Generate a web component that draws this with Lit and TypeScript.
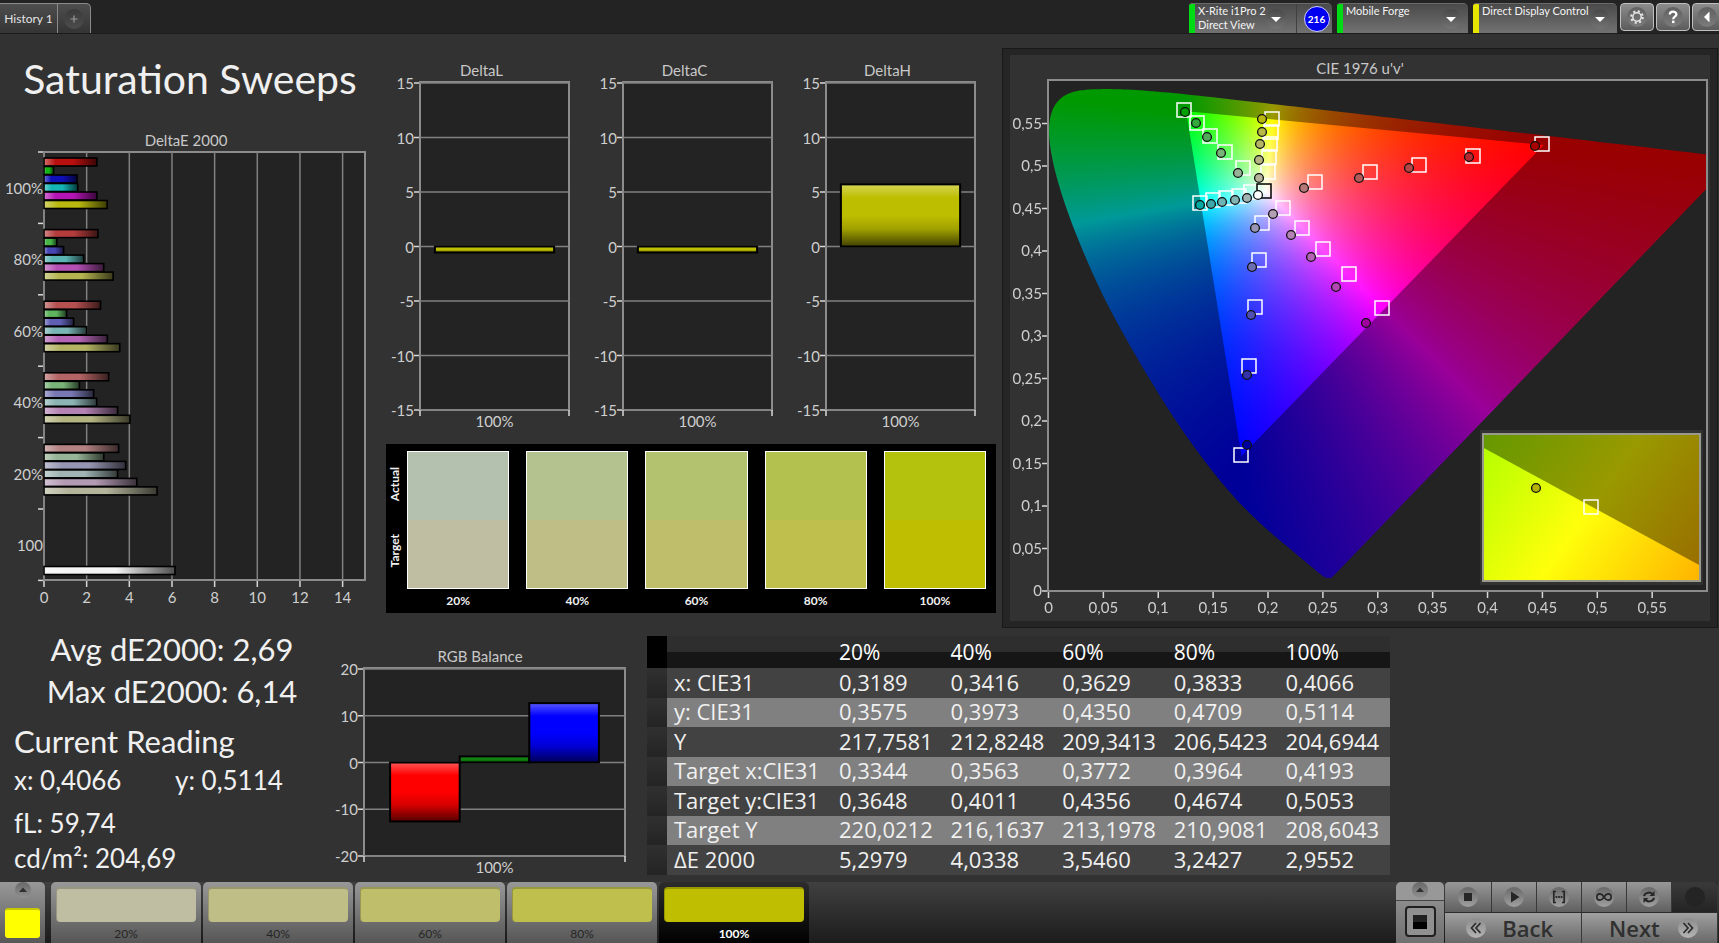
import { LitElement, html, svg, css } from "lit";
import { customElement, property } from "lit/decorators.js";
import { classMap } from "lit/directives/class-map.js";
import { styleMap } from "lit/directives/style-map.js";

const chartText = css`
  :host {
    display: block;
    min-width: 0;
  }
  svg {
    display: block;
    width: 100%;
    height: auto;
    font-family: Lato, "Open Sans", sans-serif;
    font-size: 15px;
    fill: #cfcfcf;
  }
  .title {
    fill: #c8c8c8;
    text-anchor: middle;
  }
  .mid {
    text-anchor: middle;
  }
  .end {
    text-anchor: end;
  }
  .plot {
    fill: #232323;
    stroke: #8c8c8c;
    stroke-width: 2;
  }
  .grid {
    stroke: #808080;
    stroke-width: 1.5;
  }
  .tick {
    stroke: #d8d8d8;
    stroke-width: 1.5;
  }
`;

interface Bar {
  value: number;
  color: string;
}

@customElement("column-chart")
class ColumnChart extends LitElement {
  static styles = chartText;

  @property() heading = "";
  @property({ type: Number }) limit = 15;
  @property({ type: Number }) step = 5;
  @property({ type: Number }) width = 203;
  @property({ type: Number }) height = 378;
  @property({ attribute: false }) bars: Bar[] = [];

  render() {
    const { width, height, limit, step } = this;
    const left = width > 300 ? 44 : 40;
    const right = width - (width > 300 ? 15 : 14);
    const top = width > 300 ? 29 : 25;
    const bottom = height - (width > 300 ? 24 : 26);
    const y = (v: number) => top + ((limit - v) / (2 * limit)) * (bottom - top);
    const values: number[] = [];
    for (let v = limit; v >= -limit; v -= step) values.push(v);
    const margin = (right - left) * 0.1;
    const barWidth = (right - left - 2 * margin) / Math.max(1, this.bars.length);
    return html`<svg viewBox="0 0 ${width} ${height}" role="img" aria-label=${this.heading}>
      <defs>
        <linearGradient id="gloss" x1="0" y1="0" x2="0" y2="1">
          <stop offset="0" stop-color="#fff" stop-opacity=".34"></stop>
          <stop offset=".22" stop-color="#fff" stop-opacity="0"></stop>
          <stop offset=".5" stop-color="#000" stop-opacity="0"></stop>
          <stop offset=".72" stop-color="#000" stop-opacity=".16"></stop>
          <stop offset="1" stop-color="#000" stop-opacity=".66"></stop>
        </linearGradient>
      </defs>
      <text class="title" x=${width / 2} y=${top - 7}>${this.heading}</text>
      <rect class="plot" x=${left} y=${top - 1} width=${right - left} height=${bottom - top + 1}></rect>
      ${values.map(
        (v) => svg`
          <line class="grid" x1=${left} x2=${right} y1=${y(v)} y2=${y(v)}></line>
          <line class="tick" x1=${left - 6} x2=${left - 1} y1=${y(v)} y2=${y(v)}></line>
          <text class="end" x=${left - 6} y=${y(v) + 6}>${v}</text>`
      )}
      <line class="tick" x1=${left} x2=${left} y1=${bottom} y2=${bottom + 6}></line>
      <line class="tick" x1=${right} x2=${right} y1=${bottom} y2=${bottom + 6}></line>
      ${this.bars.map((b, i) => {
        const x = left + margin + i * barWidth;
        const from = Math.min(y(b.value), y(0));
        const tall = Math.abs(y(b.value) - y(0));
        return svg`
          <rect x=${x} y=${from} width=${barWidth} height=${tall} fill=${b.color}></rect>
          <rect x=${x} y=${from} width=${barWidth} height=${tall}
            fill="url(#gloss)" stroke="#000" stroke-width="2"></rect>`;
      })}
      <text class="mid" x=${(left + right) / 2} y=${bottom + 17}>100%</text>
    </svg>`;
  }
}

const SWEEPS: { label: string; bars: [number, string][] }[] = [
  {
    label: "100%",
    bars: [[2.48, "#b80f0f"], [0.45, "#14b414"], [1.55, "#0f0fb8"], [1.58, "#14b4b4"], [2.48, "#b414b4"], [2.96, "#b8b80f"]],
  },
  {
    label: "80%",
    bars: [[2.53, "#b43c3c"], [0.6, "#46b446"], [0.92, "#4646b4"], [1.86, "#5ab4b4"], [2.8, "#b450b4"], [3.24, "#b4b450"]],
  },
  {
    label: "60%",
    bars: [[2.65, "#b45050"], [1.06, "#5fb45f"], [1.39, "#5f5fb4"], [2, "#78b4b4"], [2.97, "#b464b4"], [3.55, "#b4b464"]],
  },
  {
    label: "40%",
    bars: [[3.03, "#b46464"], [1.66, "#78b478"], [2.33, "#7878b4"], [2.47, "#8cb4b4"], [3.45, "#b482b4"], [4.03, "#b4b482"]],
  },
  {
    label: "20%",
    bars: [[3.5, "#b48282"], [2.8, "#96b496"], [3.83, "#9696b4"], [3.45, "#a0b4b4"], [4.35, "#b49bb4"], [5.3, "#b4b49b"]],
  },
];

@customElement("sweep-chart")
class SweepChart extends LitElement {
  static styles = chartText;

  private bar(value: number, color: string, y: number) {
    const w = value * 21.33;
    return svg`
      <rect x="44" y=${y} width=${w} height="8" fill=${color}></rect>
      <rect x="44" y=${y} width=${w} height="8" fill="url(#gloss)" stroke="#000" stroke-width="1.6"></rect>`;
  }

  render() {
    const ticks = [0, 1, 2, 3, 4, 5, 6];
    const values = [0, 2, 4, 6, 8, 10, 12, 14];
    return html`<svg viewBox="0 0 380 492" role="img" aria-label="DeltaE 2000">
      <defs>
        <linearGradient id="gloss">
          <stop offset="0" stop-color="#fff" stop-opacity=".4"></stop>
          <stop offset=".22" stop-color="#fff" stop-opacity="0"></stop>
          <stop offset=".55" stop-color="#000" stop-opacity="0"></stop>
          <stop offset="1" stop-color="#000" stop-opacity=".68"></stop>
        </linearGradient>
      </defs>
      <text class="title" x="186" y="18">DeltaE 2000</text>
      <rect class="plot" x="44" y="24" width="321" height="428"></rect>
      ${values.map(
        (v) => svg`
          <line class="grid" x1=${44 + v * 21.33} x2=${44 + v * 21.33} y1="24" y2="452"></line>
          <line class="tick" x1=${44 + v * 21.33} x2=${44 + v * 21.33} y1="453" y2="459"></line>
          <text class="mid" x=${44 + v * 21.33} y="475">${v}</text>`
      )}
      ${ticks.map((i) => svg`<line class="tick" x1="38" x2="43" y1=${24 + i * 71.4} y2=${24 + i * 71.4}></line>`)}
      ${SWEEPS.map(
        (g, i) => svg`
          <text class="end" x="43" y=${66 + i * 71.4}>${g.label}</text>
          ${g.bars.map(([value, color], k) => this.bar(value, color, 30 + i * 71.6 + k * 8.5))}`
      )}
      <text class="end" x="43" y="423">100</text>
      ${this.bar(6.14, "#f4f4f4", 438.5)}
    </svg>`;
  }
}

// Spectral locus, CIE 1931 x and y.
const LOCUS = [
  [0.1741, 0.005], [0.1714, 0.0051], [0.1689, 0.0069], [0.1644, 0.0109], [0.1566, 0.0177], [0.151, 0.0227],
  [0.144, 0.0297], [0.1355, 0.0399], [0.1241, 0.0578], [0.1096, 0.0868], [0.0913, 0.1327], [0.0687, 0.2007],
  [0.0454, 0.295], [0.0235, 0.4127], [0.0082, 0.5384], [0.0039, 0.6548], [0.0139, 0.7502], [0.0389, 0.812],
  [0.0743, 0.8338], [0.1142, 0.8262], [0.1547, 0.8059], [0.1929, 0.7816], [0.2296, 0.7543], [0.3016, 0.6923],
  [0.3731, 0.6245], [0.4441, 0.5547], [0.5125, 0.4866], [0.5752, 0.4242], [0.627, 0.3725], [0.6658, 0.334],
  [0.6915, 0.3083], [0.719, 0.2809], [0.7347, 0.2653],
];
const GAMUT = [
  [0.4507, 0.5229],
  [0.125, 0.5625],
  [0.1754, 0.1579],
];

type Point = [number, number];
const SERIES: { colors: string[]; targets: Point[]; readings: Point[] }[] = [
  {
    colors: ["#00a000", "#32aa3c", "#50aa5a", "#78b478", "#96b496"],
    targets: [[174, 55], [187, 68], [200, 81], [215, 97], [233, 113]],
    readings: [[175, 57], [186, 68], [197, 82], [211, 98], [228, 118]],
  },
  {
    colors: ["#b8b80f", "#b8b846", "#b4b464", "#b4b482", "#b4b49b"],
    targets: [[262, 64], [261, 77], [260, 89], [259, 102], [258, 117]],
    readings: [[252, 64], [252, 77], [250, 89], [249, 105], [249, 123]],
  },
  {
    colors: ["#00aaa0", "#3caaaa", "#6eb4b4", "#82b4b4", "#a0b4b4"],
    targets: [[190, 148], [203, 145], [216, 143], [229, 141], [241, 137]],
    readings: [[190, 150], [201, 149], [212, 147], [225, 145], [237, 143]],
  },
  {
    colors: ["#b47878", "#b45a5a", "#b44646", "#b42832", "#aa0000"],
    targets: [[305, 127], [360, 117], [409, 110], [463, 101], [532, 89]],
    readings: [[294, 133], [349, 123], [399, 113], [459, 102], [525, 91]],
  },
  {
    colors: ["#b4a0b4", "#b482b4", "#b464b4", "#b446b4", "#a000a0"],
    targets: [[273, 153], [292, 173], [313, 194], [339, 219], [372, 253]],
    readings: [[263, 159], [281, 180], [301, 202], [326, 232], [356, 268]],
  },
  {
    colors: ["#9696b4", "#6e6eb4", "#5050b4", "#3232aa", "#0000a0"],
    targets: [[252, 168], [249, 205], [245, 252], [239, 311], [231, 400]],
    readings: [[245, 173], [242, 212], [241, 260], [237, 320], [237, 390]],
  },
];

@customElement("cie-chart")
class CieChart extends LitElement {
  static styles = [
    chartText,
    css`
      canvas {
        display: block;
      }
      .target {
        fill: none;
        stroke: #fff;
        stroke-width: 1.5;
      }
      .white-point {
        stroke: #000;
      }
      .reading {
        stroke: #101010;
        stroke-width: 1.3;
      }
      .inset-edge {
        fill: #323232;
      }
      .inset-frame {
        fill: none;
        stroke: #9a9a8c;
        stroke-width: 2;
      }
    `,
  ];

  firstUpdated() {
    const canvas = this.renderRoot.querySelector("canvas") as HTMLCanvasElement;
    const ctx = canvas.getContext("2d")!;
    const w = canvas.width;
    const h = canvas.height;
    const toX = (u: number) => u * 1097.5;
    const toY = (v: number) => h + 0.5 - v * 852;

    const sheet = () => {
      const out = document.createElement("canvas");
      out.width = w;
      out.height = h;
      return out;
    };
    const layer = (level: number) => {
      const out = sheet();
      const octx = out.getContext("2d")!;
      const img = octx.createImageData(w, h);
      for (let py = 0; py < h; py++) {
        for (let px = 0; px < w; px++) {
          const u = (px + 0.5) / 1097.5;
          const v = Math.max(0.004, (h - py) / 852);
          const X = (9 * u) / (4 * v);
          const Z = (12 - 3 * u - 20 * v) / (4 * v);
          const rgb = [
            3.2406 * X - 1.5372 - 0.4986 * Z,
            -0.9689 * X + 1.8758 + 0.0415 * Z,
            0.0557 * X - 0.204 + 1.057 * Z,
          ].map((c) => Math.max(0, c));
          const peak = Math.max(...rgb, 1e-6);
          const at = (py * w + px) * 4;
          for (let k = 0; k < 3; k++) img.data[at + k] = (255 * level * rgb[k]) / peak;
          img.data[at + 3] = 255;
        }
      }
      octx.putImageData(img, 0, 0);
      return out;
    };
    // The outline is widened by a round pen, then used as a mask for the colours.
    const paint = (points: number[][], level: number, pen: number) => {
      const mask = sheet();
      const m = mask.getContext("2d")!;
      m.beginPath();
      points.forEach(([u, v]) => m.lineTo(toX(u), toY(v)));
      m.closePath();
      m.fill();
      if (pen > 0) {
        m.lineWidth = pen;
        m.lineJoin = "round";
        m.stroke();
      }
      m.globalCompositeOperation = "source-in";
      m.drawImage(layer(level), 0, 0);
      ctx.drawImage(mask, 0, 0);
    };
    const locus = LOCUS.map(([x, y]) => {
      const d = -2 * x + 12 * y + 3;
      return [(4 * x) / d, (9 * y) / d];
    });
    // Catmull-Rom subdivision rounds the sparse part of the locus.
    const smooth: number[][] = [];
    for (let i = 0; i < locus.length - 1; i++) {
      const p0 = locus[Math.max(0, i - 1)];
      const p1 = locus[i];
      const p2 = locus[i + 1];
      const p3 = locus[Math.min(locus.length - 1, i + 2)];
      for (let s = 0; s < 8; s++) {
        const t = s / 8;
        smooth.push(
          [0, 1].map(
            (k) =>
              0.5 *
              (2 * p1[k] +
                (p2[k] - p0[k]) * t +
                (2 * p0[k] - 5 * p1[k] + 4 * p2[k] - p3[k]) * t * t +
                (3 * p1[k] - p0[k] - 3 * p2[k] + p3[k]) * t * t * t)
          )
        );
      }
    }
    smooth.push(locus[locus.length - 1]);
    paint(smooth, 0.6, 3);
    paint(GAMUT, 1, 0);
  }

  private target([x, y]: Point, extra = "") {
    return svg`<rect class="target ${extra}" x=${x - 7} y=${y - 7} width="14" height="14"></rect>`;
  }

  private reading([x, y]: Point, color: string) {
    return svg`<circle class="reading" cx=${x} cy=${y} r="4.4" fill=${color}></circle>`;
  }

  render() {
    const ticks = Array.from({ length: 12 }, (_, i) => i);
    const label = (i: number) => String(Math.round(i * 5) / 100).replace(".", ",");
    return html`<svg viewBox="0 0 700 566" role="img" aria-label="CIE 1976 u'v'">
      <defs>
        <linearGradient id="lit" gradientUnits="userSpaceOnUse" x1="474" y1="377" x2="688" y2="527">
          <stop offset="0" stop-color="#b0ff00"></stop>
          <stop offset=".5" stop-color="#ffff0a"></stop>
          <stop offset="1" stop-color="#ffb400"></stop>
        </linearGradient>
        <linearGradient id="dim" gradientUnits="userSpaceOnUse" x1="474" y1="377" x2="688" y2="527">
          <stop offset="0" stop-color="#649900"></stop>
          <stop offset=".5" stop-color="#999900"></stop>
          <stop offset="1" stop-color="#996c00"></stop>
        </linearGradient>
      </defs>
      <text class="title" x="350" y="19">CIE 1976 u'v'</text>
      <rect class="plot" x="38" y="25" width="659" height="511"></rect>
      <foreignObject x="39" y="26" width="657" height="509">
        <canvas width="657" height="509"></canvas>
      </foreignObject>
      ${ticks.map(
        (i) => svg`
          <line class="tick" x1=${38.5 + i * 54.88} x2=${38.5 + i * 54.88} y1="537" y2="543"></line>
          <text class="mid" x=${38.5 + i * 54.88} y="558">${label(i)}</text>
          <line class="tick" x1="32" x2="37" y1=${536 - i * 42.5} y2=${536 - i * 42.5}></line>
          <text class="end" x="32" y=${541 - i * 42.5}>${label(i)}</text>`
      )}
      ${SERIES.map((s) => s.targets.map((p) => this.target(p)))}
      ${this.target([254, 136], "white-point")}
      ${SERIES.map((s) => s.readings.map((p, i) => this.reading(p, s.colors[i])))}
      ${this.reading([248, 140], "#ffffff")}
      <rect class="inset-edge" x="470" y="375" width="223" height="155"></rect>
      <rect x="472" y="378" width="219" height="149" fill="url(#dim)"></rect>
      <path d="M472 392L691 511V527H472Z" fill="url(#lit)"></path>
      <rect class="inset-frame" x="473" y="379" width="217" height="147"></rect>
      ${this.target([581, 452])} ${this.reading([526, 433], "#b4b400")}
    </svg>`;
  }
}

const SWATCHES = [
  { label: "20%", actual: "#b4c1ae", target: "#bfbea3" },
  { label: "40%", actual: "#b4c28f", target: "#c0be87" },
  { label: "60%", actual: "#b3c26f", target: "#bebe6b" },
  { label: "80%", actual: "#b3c14e", target: "#bebf4c" },
  { label: "100%", actual: "#b4c10d", target: "#bfbe00" },
];

const ROWS: [string, string[]][] = [
  ["x: CIE31", ["0,3189", "0,3416", "0,3629", "0,3833", "0,4066"]],
  ["y: CIE31", ["0,3575", "0,3973", "0,4350", "0,4709", "0,5114"]],
  ["Y", ["217,7581", "212,8248", "209,3413", "206,5423", "204,6944"]],
  ["Target x:CIE31", ["0,3344", "0,3563", "0,3772", "0,3964", "0,4193"]],
  ["Target y:CIE31", ["0,3648", "0,4011", "0,4356", "0,4674", "0,5053"]],
  ["Target Y", ["220,0212", "216,1637", "213,1978", "210,9081", "208,6043"]],
  ["ΔE 2000", ["5,2979", "4,0338", "3,5460", "3,2427", "2,9552"]],
];

const icon = (body: unknown) => html`<svg class="icon" viewBox="0 0 20 20" aria-hidden="true">${body}</svg>`;

const ICONS = {
  down: svg`<path d="M5 8H15L10 13Z" fill="#fff"/>`,
  left: svg`<path d="M12.5 4.5V15.5L7 10Z" fill="#fff"/>`,
  up: svg`<path d="M5 12.5H15L10 7Z" fill="#303030"/>`,
  plus: svg`<path d="M10 6.5V13.5M6.5 10H13.5" stroke="#9a9a9a" stroke-width="1.2"/>`,
  gear: svg`<g fill="none" stroke="#e6e6e6"><circle cx="10" cy="10" r="4.2" stroke-width="1.5"/><circle cx="10" cy="10" r="5.8" stroke-width="2" stroke-dasharray="2.2 2.355"/></g>`,
  help: svg`<path d="M6.8 7.6C6.8 3.6 13.4 3.7 13.4 7.4C13.4 9.6 10.2 9.8 10.2 12.2" fill="none" stroke="#fff" stroke-width="2.3"/><rect x="9" y="13.6" width="2.5" height="2.5" fill="#fff"/>`,
  stop: svg`<rect x="6" y="6" width="8" height="8" fill="#262626"/>`,
  play: svg`<path d="M7 4.5V15.5L15.5 10Z" fill="#262626"/>`,
  range: svg`<g fill="none" stroke="#262626" stroke-width="1.7"><path d="M7 4.5H4.8V15.5H7M13 4.5H15.2V15.5H13"/><path d="M6.6 10H13.4" stroke-width="2" stroke-dasharray="1.7 .85"/></g>`,
  loop: svg`<path d="M10 10C8.5 7.6 7.2 6.9 5.9 6.9A3.1 3.1 0 0 0 5.9 13.1C7.2 13.1 8.5 12.4 10 10C11.5 7.6 12.8 6.9 14.1 6.9A3.1 3.1 0 0 1 14.1 13.1C12.8 13.1 11.5 12.4 10 10Z" fill="none" stroke="#262626" stroke-width="1.6"/>`,
  repeat: svg`<g fill="none" stroke="#262626" stroke-width="2"><path d="M5 9.2C5.5 6 10.5 4.2 13.5 7"/><path d="M15 10.8C14.5 14 9.5 15.8 6.5 13"/></g><path d="M15.5 4V9H10.5ZM4.5 16V11H9.5Z" fill="#262626"/>`,
  back: svg`<path d="M10 5L5.5 10L10 15M14.5 5L10 10L14.5 15" fill="none" stroke="#2c2c2c" stroke-width="1.7"/>`,
  next: svg`<path d="M10 5L14.5 10L10 15M5.5 5L10 10L5.5 15" fill="none" stroke="#2c2c2c" stroke-width="1.7"/>`,
};

@customElement("app-root")
class AppRoot extends LitElement {
  static styles = css`
    :host {
      display: flex;
      flex-direction: column;
      min-height: 100vh;
      overflow: hidden;
      background: #323232;
      color: #f0f0f0;
      font-family: Lato, "Open Sans", sans-serif;
    }
    * {
      box-sizing: border-box;
    }
    button {
      margin: 0;
      padding: 0;
      border: 0;
      background: none;
      color: inherit;
      font: inherit;
    }
    h1,
    h2,
    p {
      margin: 0;
      font-weight: 400;
    }
    .icon {
      display: block;
      width: 20px;
      height: 20px;
      border-radius: 50%;
      flex: none;
    }

    header {
      display: flex;
      align-items: flex-end;
      justify-content: space-between;
      height: 34px;
      background: #232323;
      border-bottom: 1px solid #1c1c1c;
    }
    .tabs {
      display: flex;
      height: 30px;
      border: solid #8a8a8a;
      border-width: 1px 1px 0 0;
      border-radius: 0 5px 0 0;
      background: linear-gradient(#4e4e4e, #343434);
    }
    .tab {
      width: 58px;
      border-right: 1px solid #8a8a8a;
      color: #e4e4e4;
      font-size: 12px;
      text-align: center;
    }
    .add {
      display: grid;
      place-items: center;
      width: 32px;
    }
    .add .icon {
      background: linear-gradient(#3a3a3a, #4c4c4c);
    }
    .devices {
      display: flex;
      gap: 5px;
    }
    .device {
      display: flex;
      height: 30px;
      border-radius: 3px 5px 0 0;
      border-top: 1px solid #6a6a6a;
      background: linear-gradient(#4a4a4a, #727272);
      color: #f4f4f4;
      font-size: 11px;
      line-height: 14px;
      overflow: hidden;
    }
    .lamp {
      flex: none;
      width: 6px;
      background: #00dc14;
    }
    .lamp.yellow {
      background: #e6e600;
    }
    .device p {
      flex: 1;
      min-width: 0;
      padding: 0 0 0 3px;
      white-space: nowrap;
    }
    .drop {
      display: grid;
      place-items: center;
      flex: none;
      width: 34px;
    }
    .drop .icon {
      background: linear-gradient(#484848, #747474);
    }
    .meter {
      width: 143px;
    }
    .source {
      width: 131px;
    }
    .display {
      width: 144px;
    }
    .count {
      display: grid;
      place-items: center;
      flex: none;
      width: 36px;
      margin-left: 3px;
      padding-left: 4px;
      border-left: 1px solid #404040;
    }
    .count span {
      width: 26px;
      height: 26px;
      border: 1px solid #d0d0ff;
      border-radius: 50%;
      background: #0000f0;
      color: #fff;
      font-size: 10px;
      font-weight: 700;
      line-height: 24px;
      text-align: center;
    }
    .tools {
      display: flex;
      gap: 2px;
      margin: 0 -3px 2px -2px;
    }
    .tool {
      display: grid;
      place-items: center;
      width: 34px;
      height: 28px;
      border: 1px solid #c0c0c0;
      border-radius: 4px;
      background: linear-gradient(#8c8c8c, #5c5c5c);
    }
    .tool:last-child {
      width: 30px;
    }
    .tool .icon {
      background: linear-gradient(#606060, #7c7c7c);
    }

    main {
      flex: 1;
    }
    .upper {
      display: grid;
      grid-template-columns: 380fr 621fr 718fr;
      align-items: start;
    }
    h1 {
      padding: 21px 0 25px;
      font-size: 41px;
      line-height: 48px;
      text-align: center;
      white-space: nowrap;
    }
    .middle {
      padding: 24px 0 0;
    }
    .deltas {
      display: grid;
      grid-template-columns: repeat(3, 1fr);
      padding-right: 12px;
    }
    .swatches {
      display: flex;
      gap: 17px;
      margin: 8px 5px 0 6px;
      padding: 7px 10px 5px 0;
      background: #000;
    }
    .side {
      display: flex;
      justify-content: space-around;
      width: 17px;
      margin: 0 -13px 24px 0;
      font-size: 12px;
      font-weight: 700;
      line-height: 17px;
      writing-mode: vertical-rl;
    }
    .side span {
      transform: rotate(180deg);
    }
    .swatch {
      flex: 1;
      margin: 0;
      text-align: center;
    }
    .pair {
      height: 138px;
      border: 1px solid #fff;
      display: flex;
      flex-direction: column;
    }
    .pair div {
      flex: 1;
    }
    .swatch figcaption {
      padding-top: 4px;
      font-size: 12px;
      font-weight: 700;
      line-height: 15px;
    }
    .cie {
      margin: 14px 1px 0;
      padding: 6px 7px;
      border: 1px solid #181818;
      background: linear-gradient(#323232, #323232) content-box, #252525;
    }

    .lower {
      display: grid;
      grid-template-columns: 320fr 320fr 1079fr;
      align-items: start;
    }
    .stats {
      padding: 0 0 0 14px;
      white-space: nowrap;
    }
    .big {
      font-size: 31px;
      line-height: 42px;
    }
    .total {
      padding-left: 10px;
      text-align: center;
    }
    h2.big {
      padding-top: 8px;
    }
    .value {
      font-size: 26px;
      line-height: 35px;
    }
    .coords {
      display: grid;
      grid-template-columns: 161px 1fr;
      padding-top: 1px;
    }
    .luma {
      padding-top: 8px;
    }
    .balance {
      padding-top: 12px;
    }
    table {
      width: 100%;
      max-width: 743px;
      margin: 8px 0 0 7px;
      border-collapse: collapse;
      table-layout: fixed;
      font-family: "Open Sans", "Noto Sans", sans-serif;
      font-size: 22px;
      line-height: 27px;
      color: #f0f0f0;
      white-space: nowrap;
    }
    th,
    td {
      height: 30px;
      padding: 0 0 2px 7px;
      font-weight: 400;
      text-align: left;
      background: #424242;
    }
    thead th {
      height: 32px;
      padding-bottom: 0;
      background: linear-gradient(#2e2e2e 50%, #161616 50%);
      font-size: 21px;
      font-weight: 500;
      color: #fff;
    }
    thead .grip {
      background: #000;
    }
    .grip {
      width: 20px;
      background: linear-gradient(#303030, #242424);
    }
    .name {
      width: 165px;
    }
    tbody tr:nth-child(even) > * {
      height: 29px;
    }
    tbody tr:nth-child(even) > :not(.grip) {
      background: #808080;
    }

    footer {
      display: flex;
      justify-content: space-between;
      height: 61px;
      background: linear-gradient(#404040, #1c1c1c);
    }
    .patches {
      display: flex;
      gap: 2px;
    }
    .current {
      display: flex;
      flex-direction: column;
      align-items: center;
      justify-content: space-between;
      width: 45px;
      margin-right: 4px;
      padding: 0 0 5px;
      border-radius: 0 5px 0 0;
      background: linear-gradient(#989898, #585858);
    }
    .current .icon,
    .window .icon {
      width: 16px;
      height: 16px;
      background: linear-gradient(#686868, #909090);
    }
    .current i {
      width: 35px;
      height: 30px;
      border-radius: 3px;
      border-top: 2px solid #c8c800;
      background: #ffff00;
    }
    .patch {
      display: flex;
      flex-direction: column;
      align-items: center;
      width: 150px;
      padding-top: 5px;
      border-radius: 5px 5px 0 0;
      background: linear-gradient(#989898, #565656);
      color: #262626;
      font-size: 12px;
      line-height: 18px;
    }
    .patch i {
      width: 140px;
      height: 36px;
      margin-bottom: 3px;
      border: solid rgba(0, 0, 0, 0.2);
      border-width: 2px 0 0 1px;
      border-radius: 4px;
      background-clip: border-box;
    }
    .patch.active {
      background: linear-gradient(#2c2c2c, #000);
      color: #fff;
      font-weight: 700;
    }
    .controls {
      display: flex;
      gap: 1px;
      padding-right: 1px;
    }
    .window {
      display: flex;
      flex-direction: column;
      align-items: center;
      width: 48px;
      border-radius: 5px 5px 0 0;
      background: linear-gradient(#989898 0 18px, #444 18px 19px, #8c8c8c 19px, #707070);
    }
    .window .icon {
      margin-bottom: 8px;
    }
    .window i {
      display: grid;
      place-items: center;
      width: 31px;
      height: 31px;
      border: 2px solid #202020;
      border-radius: 4px;
      background: #909090;
    }
    .window b {
      width: 14px;
      height: 14px;
      background: linear-gradient(#222 50%, #000 50%);
    }
    .keys {
      display: grid;
      grid-template-columns: 47px repeat(4, 45px) 46px;
      grid-template-rows: 30px 30px;
      gap: 1px 0;
      background: #2c2c2c;
    }
    .key {
      display: grid;
      place-items: center;
      border-right: 1px solid #383838;
      background: linear-gradient(#989898, #606060);
    }
    .key .icon {
      background: linear-gradient(#686868, #a0a0a0);
    }
    .key:first-child {
      border-radius: 4px 0 0 0;
    }
    .key.off {
      background: linear-gradient(#3a3a3a, #242424);
      border-radius: 0 5px 0 0;
    }
    .key.off .icon {
      background: #242424;
    }
    .move {
      grid-column: span 3;
      display: flex;
      align-items: center;
      justify-content: space-between;
      padding: 0 28px 0 21px;
      border-right: 1px solid #383838;
      background: linear-gradient(#a0a0a0, #686868);
      color: #303030;
      font-family: "Open Sans", "Noto Sans", sans-serif;
      font-size: 22px;
      font-weight: 600;
      line-height: 28px;
    }
    .move.forward {
      padding: 0 19px 0 27px;
    }
    .move .icon {
      background: linear-gradient(#8c8c8c, #b4b4b4);
    }
  `;

  private delta(heading: string, value: number) {
    return html`<column-chart heading=${heading} .bars=${[{ value, color: "#bebe00" }]}></column-chart>`;
  }

  render() {
    const keys: [string, unknown][] = [
      ["Stop", ICONS.stop],
      ["Play", ICONS.play],
      ["Range", ICONS.range],
      ["Continuous", ICONS.loop],
      ["Repeat", ICONS.repeat],
    ];
    return html`
      <header>
        <nav class="tabs">
          <button class="tab">History 1</button>
          <button class="add" aria-label="Add tab">${icon(ICONS.plus)}</button>
        </nav>
        <div class="devices">
          <div class="device meter">
            <span class="lamp"></span>
            <p>X-Rite i1Pro 2<br />Direct View</p>
            <button class="drop" aria-label="Meter menu">${icon(ICONS.down)}</button>
            <div class="count"><span>216</span></div>
          </div>
          <div class="device source">
            <span class="lamp"></span>
            <p>Mobile Forge</p>
            <button class="drop" aria-label="Source menu">${icon(ICONS.down)}</button>
          </div>
          <div class="device display">
            <span class="lamp yellow"></span>
            <p>Direct Display Control</p>
            <button class="drop" aria-label="Display menu">${icon(ICONS.down)}</button>
          </div>
          <div class="tools">
            <button class="tool" aria-label="Settings">${icon(ICONS.gear)}</button>
            <button class="tool" aria-label="Help">${icon(ICONS.help)}</button>
            <button class="tool" aria-label="Collapse">${icon(ICONS.left)}</button>
          </div>
        </div>
      </header>
      <main>
        <section class="upper">
          <div>
            <h1>Saturation Sweeps</h1>
            <sweep-chart></sweep-chart>
          </div>
          <div class="middle">
            <div class="deltas">
              ${this.delta("DeltaL", -0.55)} ${this.delta("DeltaC", -0.55)} ${this.delta("DeltaH", 5.7)}
            </div>
            <div class="swatches">
              <div class="side"><span>Actual</span><span>Target</span></div>
              ${SWATCHES.map(
                (s) => html`<figure class="swatch">
                  <div class="pair">
                    <div style=${styleMap({ background: s.actual })}></div>
                    <div style=${styleMap({ background: s.target })}></div>
                  </div>
                  <figcaption>${s.label}</figcaption>
                </figure>`
              )}
            </div>
          </div>
          <div class="cie"><cie-chart></cie-chart></div>
        </section>
        <section class="lower">
          <div class="stats">
            <p class="big total">Avg dE2000: 2,69</p>
            <p class="big total">Max dE2000: 6,14</p>
            <h2 class="big">Current Reading</h2>
            <div class="value coords"><span>x: 0,4066</span><span>y: 0,5114</span></div>
            <p class="value luma">fL: 59,74</p>
            <p class="value">cd/m²: 204,69</p>
          </div>
          <column-chart
            class="balance"
            heading="RGB Balance"
            limit="20"
            step="10"
            width="320"
            height="240"
            .bars=${[
              { value: -12.6, color: "#ff0000" },
              { value: 1.3, color: "#108210" },
              { value: 12.7, color: "#0000ff" },
            ]}
          ></column-chart>
          <table>
            <thead>
              <tr>
                <th class="grip"></th>
                <th class="name"></th>
                ${SWATCHES.map((s) => html`<th scope="col">${s.label}</th>`)}
              </tr>
            </thead>
            <tbody>
              ${ROWS.map(
                ([name, cells]) => html`<tr>
                  <td class="grip"></td>
                  <th scope="row">${name}</th>
                  ${cells.map((c) => html`<td>${c}</td>`)}
                </tr>`
              )}
            </tbody>
          </table>
        </section>
      </main>
      <footer>
        <div class="patches">
          <button class="current" aria-label="Current colour">${icon(ICONS.up)}<i></i></button>
          ${SWATCHES.map(
            (s) => html`<button class=${classMap({ patch: true, active: s.label === "100%" })}>
              <i style=${styleMap({ backgroundColor: s.target })}></i>${s.label}
            </button>`
          )}
        </div>
        <div class="controls">
          <button class="window" aria-label="Pattern window">${icon(ICONS.up)}<i><b></b></i></button>
          <div class="keys">
            ${keys.map(([name, body]) => html`<button class="key" aria-label=${name}>${icon(body)}</button>`)}
            <button class="key off" aria-label="Record" disabled>${icon("")}</button>
            <button class="move">${icon(ICONS.back)}Back</button>
            <button class="move forward">Next${icon(ICONS.next)}</button>
          </div>
        </div>
      </footer>
    `;
  }
}
